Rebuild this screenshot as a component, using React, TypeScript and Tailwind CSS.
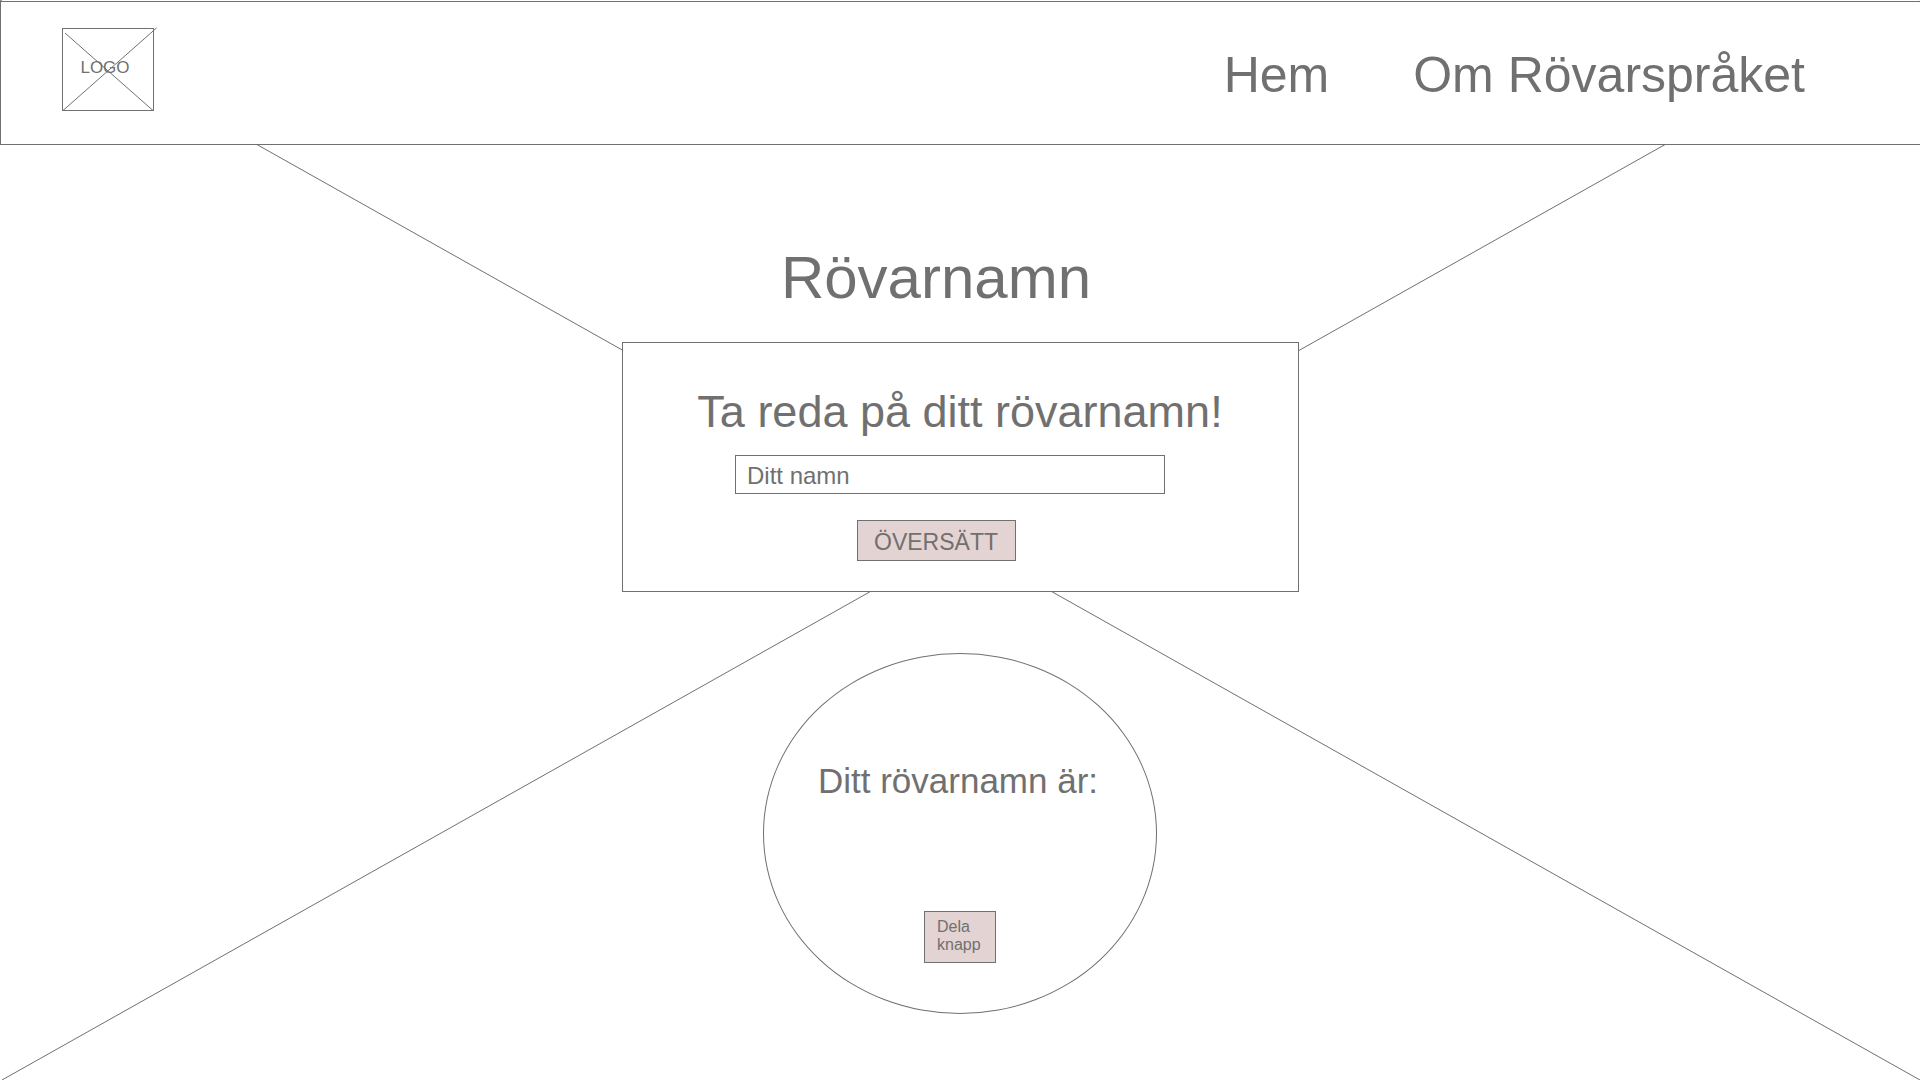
import React from "react";

function Backdrop() {
  return (
    <svg
      className="absolute inset-0 h-full w-full"
      viewBox="0 0 1920 1080"
      preserveAspectRatio="none"
      fill="none"
      stroke="#707070"
      aria-hidden="true"
    >
      <path d="M0 0 1920 1080M2 1080 1922 0" vectorEffect="non-scaling-stroke" />
    </svg>
  );
}

function Logo() {
  return (
    <a
      href="#hem"
      className="relative flex h-[83px] w-[92px] items-center justify-center border border-[#707070] pr-1.5 pb-1 text-[17px] leading-5"
    >
      <svg
        className="absolute inset-0 overflow-visible"
        width="90"
        height="81"
        viewBox="0 0 90 81"
        fill="none"
        stroke="#707070"
        aria-hidden="true"
      >
        <path d="M2 4 90 81.500M0 81.500 93.500-1" />
      </svg>
      LOGO
    </a>
  );
}

function Header() {
  return (
    <header className="relative flex items-start justify-between border-y border-l border-[#707070] bg-white pt-[26px] pr-[115px] pb-[33px] pl-[61px]">
      <Logo />
      <nav className="mt-[17px] flex gap-[84px] text-[50px] leading-[60px]">
        <a href="#hem">Hem</a>
        <a href="#om">Om Rövarspråket</a>
      </nav>
    </header>
  );
}

function TranslateCard() {
  return (
    <form
      className="flex w-full max-w-[677px] flex-col items-center border border-[#707070] bg-white pt-[42px] pb-[30px]"
      onSubmit={(e) => e.preventDefault()}
    >
      <h2 className="text-[45px] leading-[54px]">Ta reda på ditt rövarnamn!</h2>
      <input
        type="text"
        aria-label="Ditt namn"
        placeholder="Ditt namn"
        className="mt-4 mr-5 h-[39px] w-[430px] border border-[#707070] bg-white pt-[3px] pl-[11px] text-[24px] leading-8 outline-none placeholder:text-[#707070]"
      />
      <button
        type="submit"
        className="mt-[26px] mr-12 h-[41px] w-[159px] border border-[#707070] bg-[#e3d3d3] pt-0.5 text-[23px] leading-8"
      >
        ÖVERSÄTT
      </button>
    </form>
  );
}

function Result() {
  return (
    <section className="mt-[61px] flex h-[361px] w-[394px] flex-col items-center rounded-[50%] border border-[#707070] pt-[106px]">
      <p className="mr-1 text-[35px] leading-[42px]">Ditt rövarnamn är:</p>
      <button
        type="button"
        className="mt-[109px] w-[72px] border border-[#707070] bg-[#e3d3d3] pt-[6px] pr-2 pb-2 pl-3 text-left text-[16px] leading-[18px]"
      >
        Dela knapp
      </button>
    </section>
  );
}

export default function App() {
  return (
    <div className="relative min-h-screen bg-white pt-px font-['Liberation_Sans',Arial,sans-serif] text-[#707070]">
      <Backdrop />
      <Header />
      <main className="relative flex flex-col items-center pt-[97px]">
        <h1 className="mr-12 mb-7 text-[60px] leading-[72px]">Rövarnamn</h1>
        <TranslateCard />
        <Result />
      </main>
    </div>
  );
}
